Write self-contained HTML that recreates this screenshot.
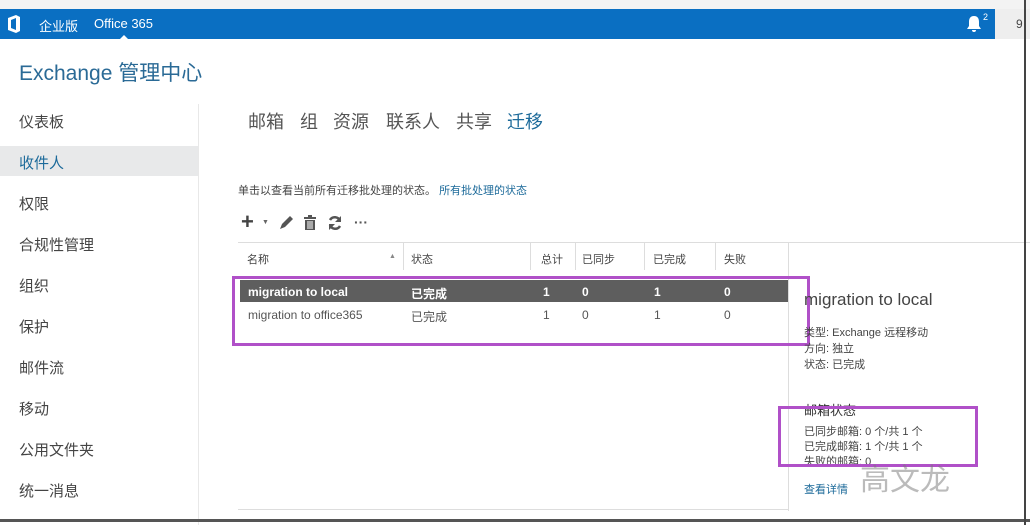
<!DOCTYPE html><html><head><meta charset="utf-8"><style>
body{margin:0;width:1030px;height:525px;overflow:hidden;background:#fff;font-family:"Liberation Sans","Noto Sans CJK SC",sans-serif;position:relative;color:#333}
.a{position:absolute;white-space:nowrap}
.nav{font-size:15px;color:#444;left:19px}
.tab{font-size:18px;color:#555;top:108px}
</style></head><body>
<div class="a" style="left:0;top:0;width:1030px;height:9px;background:#f3f3f3"></div>
<div class="a" style="left:0;top:9px;width:995px;height:30px;background:#0a6fc2"></div>
<div class="a" style="left:995px;top:9px;width:35px;height:30px;background:#eeeeee"></div>
<div class="a" style="left:1016px;top:17px;font-size:12px;color:#444">9</div>
<svg class="a" style="left:7px;top:15px" width="14" height="18" viewBox="0 0 14 18"><path d="M1 3L9 0L13 2V16L9 18L1 15Z M4 5V13L9 15V3Z" fill="#fff" fill-rule="evenodd"/></svg>
<div class="a" style="left:39px;top:16px;font-size:13px;color:#fff">企业版</div>
<div class="a" style="left:94px;top:16px;font-size:13px;color:#fff">Office 365</div>
<div class="a" style="left:120px;top:35px;width:0;height:0;border-left:4px solid transparent;border-right:4px solid transparent;border-bottom:4px solid #fff"></div>
<svg class="a" style="left:966px;top:15px" width="16" height="18" viewBox="0 0 16 18"><path d="M8 1C4 1 3 4 3 7V11L1 14H15L13 11V7C13 4 12 1 8 1Z M6 15A2 2 0 0 0 10 15Z" fill="#fff"/></svg>
<div class="a" style="left:983px;top:12px;font-size:9px;color:#fff">2</div>
<div class="a" style="left:19px;top:57px;font-size:21px;color:#2a6a96">Exchange 管理中心</div>
<div class="a" style="left:0;top:146px;width:198px;height:30px;background:#e8e9ea"></div>
<div class="a" style="left:198px;top:104px;width:1px;height:421px;background:#e8e8e8"></div>
<div class="a nav" style="top:111px">仪表板</div>
<div class="a nav" style="top:152px;color:#1c6a9a">收件人</div>
<div class="a nav" style="top:193px">权限</div>
<div class="a nav" style="top:234px">合规性管理</div>
<div class="a nav" style="top:275px">组织</div>
<div class="a nav" style="top:316px">保护</div>
<div class="a nav" style="top:357px">邮件流</div>
<div class="a nav" style="top:398px">移动</div>
<div class="a nav" style="top:439px">公用文件夹</div>
<div class="a nav" style="top:480px">统一消息</div>
<div class="a tab" style="left:248px">邮箱</div>
<div class="a tab" style="left:300px">组</div>
<div class="a tab" style="left:333px">资源</div>
<div class="a tab" style="left:386px">联系人</div>
<div class="a tab" style="left:456px">共享</div>
<div class="a tab" style="left:507px;color:#1c6a9a">迁移</div>
<div class="a" style="left:238px;top:182px;font-size:11px;color:#444">单击以查看当前所有迁移批处理的状态。 <span style="color:#1c6a9a">所有批处理的状态</span></div>
<div class="a" style="left:241px;top:210px;font-size:22px;color:#444;font-weight:bold;line-height:24px">+</div>
<div class="a" style="left:262px;top:219px;font-size:7px;color:#666">▼</div>
<svg class="a" style="left:277px;top:214px" width="18" height="18"><path d="M3 15L5 10L13 2L16 5L8 13Z" fill="#555"/></svg>
<svg class="a" style="left:303px;top:215px" width="14" height="16"><path d="M1 2H13V4H1Z M5 0H9V2H5Z M2 5H12V15H2Z" fill="#555"/><path d="M5 6V14M7 6V14M9 6V14" stroke="#fff" stroke-width="1"/></svg>
<svg class="a" style="left:327px;top:215px" width="16" height="16" viewBox="0 0 16 16"><path d="M13 6A5.5 5.5 0 0 0 3 5M3 10A5.5 5.5 0 0 0 13 11" stroke="#555" stroke-width="2.5" fill="none"/><path d="M14 1V7H8Z M2 15V9H8Z" fill="#555"/></svg>
<div class="a" style="left:354px;top:214px;font-size:14px;color:#555;font-weight:bold">···</div>
<div class="a" style="left:238px;top:242px;width:792px;height:1px;background:#ddd"></div>
<div class="a" style="left:403px;top:243px;width:1px;height:27px;background:#ddd"></div>
<div class="a" style="left:530px;top:243px;width:1px;height:27px;background:#ddd"></div>
<div class="a" style="left:575px;top:243px;width:1px;height:27px;background:#ddd"></div>
<div class="a" style="left:644px;top:243px;width:1px;height:27px;background:#ddd"></div>
<div class="a" style="left:715px;top:243px;width:1px;height:27px;background:#ddd"></div>
<div class="a" style="left:788px;top:243px;width:1px;height:268px;background:#ddd"></div>
<div class="a" style="left:247px;top:251px;font-size:11px;color:#444">名称</div>
<div class="a" style="left:389px;top:253px;font-size:7px;color:#888">▲</div>
<div class="a" style="left:411px;top:251px;font-size:11px;color:#444">状态</div>
<div class="a" style="left:541px;top:251px;font-size:11px;color:#444">总计</div>
<div class="a" style="left:582px;top:251px;font-size:11px;color:#444">已同步</div>
<div class="a" style="left:653px;top:251px;font-size:11px;color:#444">已完成</div>
<div class="a" style="left:724px;top:251px;font-size:11px;color:#444">失败</div>
<div class="a" style="left:240px;top:280px;width:548px;height:22px;background:#5e5e5e"></div>
<div class="a" style="left:248px;top:285px;font-size:12px;color:#fff;font-weight:bold">migration to local</div>
<div class="a" style="left:411px;top:285px;font-size:12px;color:#fff;font-weight:bold">已完成</div>
<div class="a" style="left:543px;top:285px;font-size:12px;color:#fff;font-weight:bold">1</div>
<div class="a" style="left:582px;top:285px;font-size:12px;color:#fff;font-weight:bold">0</div>
<div class="a" style="left:654px;top:285px;font-size:12px;color:#fff;font-weight:bold">1</div>
<div class="a" style="left:724px;top:285px;font-size:12px;color:#fff;font-weight:bold">0</div>
<div class="a" style="left:248px;top:308px;font-size:12px;color:#555">migration to office365</div>
<div class="a" style="left:411px;top:308px;font-size:12px;color:#555">已完成</div>
<div class="a" style="left:543px;top:308px;font-size:12px;color:#555">1</div>
<div class="a" style="left:582px;top:308px;font-size:12px;color:#555">0</div>
<div class="a" style="left:654px;top:308px;font-size:12px;color:#555">1</div>
<div class="a" style="left:724px;top:308px;font-size:12px;color:#555">0</div>
<div class="a" style="left:232px;top:276px;width:572px;height:64px;border:3px solid #b050c8"></div>
<div class="a" style="left:804px;top:290px;font-size:17px;color:#444">migration to local</div>
<div class="a" style="left:804px;top:325px;font-size:11px;color:#444;line-height:16px">类型: Exchange 远程移动<br>方向: 独立<br>状态: 已完成</div>
<div class="a" style="left:804px;top:400px;font-size:13px;color:#333">邮箱状态</div>
<div class="a" style="left:804px;top:425px;font-size:11px;color:#444;line-height:15px">已同步邮箱: 0 个/共 1 个<br>已完成邮箱: 1 个/共 1 个<br>失败的邮箱: 0</div>
<div class="a" style="left:804px;top:481px;font-size:11px;color:#1c6a9a">查看详情</div>
<div class="a" style="left:778px;top:406px;width:194px;height:55px;border:3px solid #b050c8"></div>
<div class="a" style="left:860px;top:455px;font-size:30px;color:rgba(120,120,120,.5)">高文龙</div>
<div class="a" style="left:238px;top:509px;width:550px;height:1px;background:#ddd"></div>
<div class="a" style="left:0;top:519px;width:1030px;height:3px;background:#555"></div>
<div class="a" style="left:1024px;top:0;width:2px;height:525px;background:#444"></div>
</body></html>
